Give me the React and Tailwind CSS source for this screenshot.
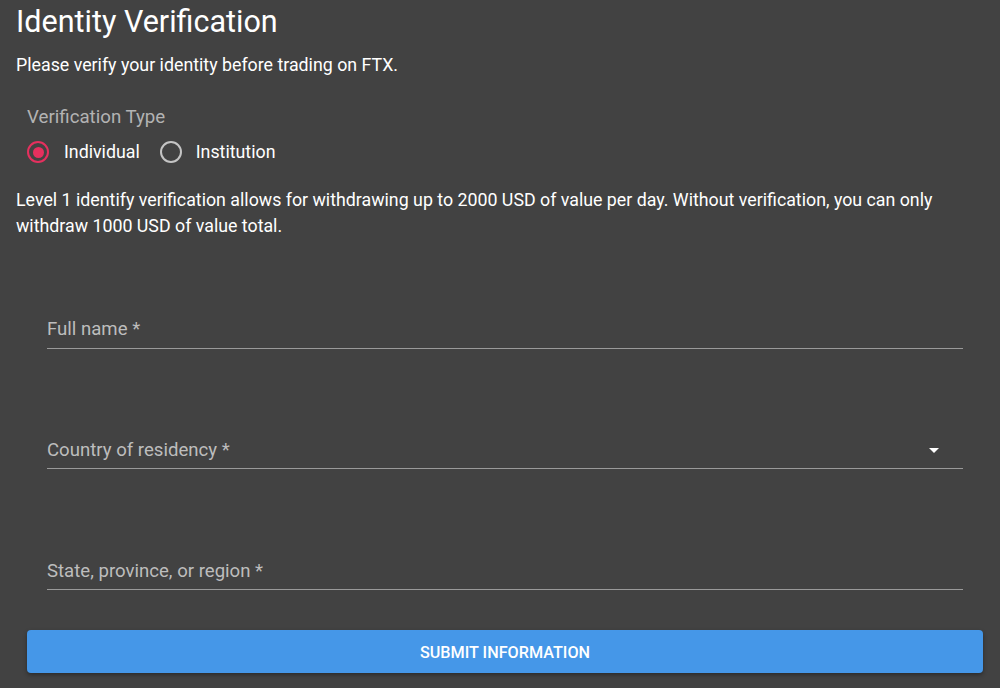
export default function App() {
  const fields = [
    { label: 'Full name', cls: 'mt-[79px] pb-[6px]', select: false },
    { label: 'Country of residency', cls: 'mt-[90px] pb-[5px]', select: true },
    { label: 'State, province, or region', cls: 'mt-[91px] pb-[5px]', select: false },
  ];

  return (
    <div className="min-h-screen w-full bg-[#424242] px-4 pt-1 font-['Roboto',sans-serif] text-white">
      <h1 className="text-[30.5px] leading-[36px] font-normal">Identity Verification</h1>
      <p className="mt-[13px] text-[17.8px] leading-6">Please verify your identity before trading on FTX.</p>

      {/* Verification type */}
      <div className="ml-[11px] mt-[28px]">
        <div className="text-[18.7px] leading-6 text-[#b3b3b3]">Verification Type</div>
        <div className="mt-[11px] flex items-center h-6">
          <span className="flex h-[22px] w-[22px] items-center justify-center rounded-full border-2 border-[#e5305e]">
            <span className="h-[11px] w-[11px] rounded-full bg-[#e5305e]" />
          </span>
          <span className="ml-[15px] text-[17.8px]">Individual</span>
          <span className="ml-[20px] h-[22px] w-[22px] rounded-full border-2 border-[#c4c4c4]" />
          <span className="ml-[14px] text-[17.8px]">Institution</span>
        </div>
      </div>

      <p className="mt-[23px] text-[17.8px] leading-[26px]">
        Level 1 identify verification allows for withdrawing up to 2000 USD of value per day. Without verification, you can only withdraw 1000 USD of value total.
      </p>

      {/* Fields */}
      {fields.map((f) => (
        <div key={f.label} className={`${f.cls} ml-[31px] mr-[21px] border-b border-[#9a9a9a]`}>
          <div className="flex h-6 items-center justify-between">
            <span className="text-[18.6px] text-[#bdbdbd]">
              {f.label} *
            </span>
            {f.select && (
              <svg width="24" height="24" viewBox="0 0 24 24" className="mr-[17px] mb-[2px]" fill="#ffffff">
                <path d="M7 10l5 5 5-5z" />
              </svg>
            )}
          </div>
        </div>
      ))}

      <button className="mt-[40px] ml-[11px] mr-px flex h-[43px] w-[956px] items-center justify-center rounded bg-[#4597e8] pt-[3px] text-[16.2px] font-medium uppercase text-white shadow-[0_2px_4px_rgba(0,0,0,0.35)]">
        Submit Information
      </button>
    </div>
  );
}
